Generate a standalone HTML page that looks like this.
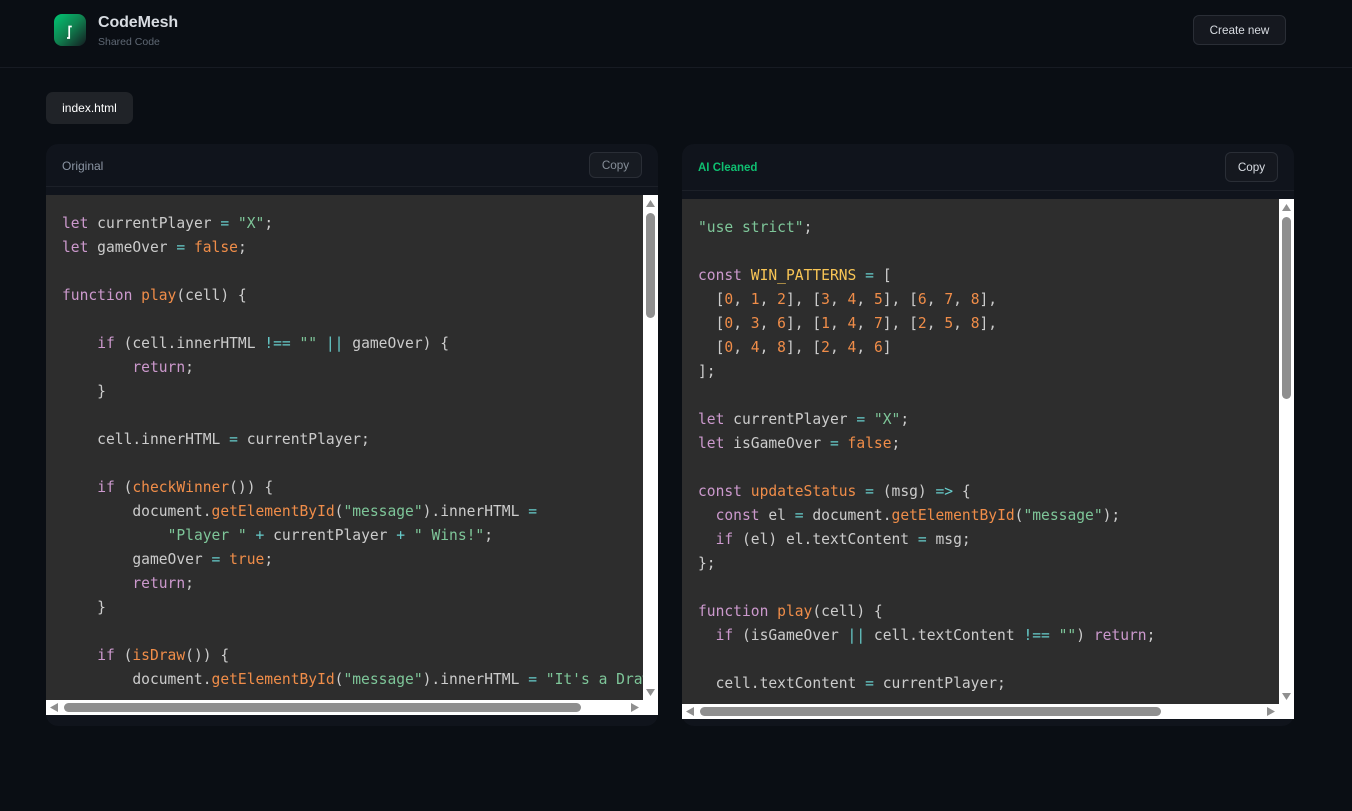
<!DOCTYPE html>
<html><head><meta charset="utf-8"><title>CodeMesh</title>
<style>
*{box-sizing:border-box}
html,body{margin:0;width:1352px;height:811px;overflow:hidden;background:#0a0e14;font-family:"Liberation Sans",sans-serif}
.a{position:absolute}
.hline{left:0;top:67px;width:1352px;height:1px;background:#171b23}
.logo{left:54px;top:14px;width:32px;height:32px;border-radius:8px;background:linear-gradient(135deg,#00c673 0%,#10804f 50%,#141a20 100%)}
.brand{left:98px;top:13px;font-size:16px;line-height:20px;font-weight:bold;color:#d8dce2;letter-spacing:-.1px}
.sub{left:98px;top:35px;font-size:10.5px;line-height:14px;color:#5f6874}
.btn{display:flex;align-items:center;justify-content:center;border:1px solid #2a2e36;border-radius:6px;background:#15181f;color:#d8dce2;font-size:11.7px}
.panel{top:144px;width:612px;height:582px;background:#10141c;border-radius:12px}
.pl{left:46px}.pr{left:682px}
.line{height:1px;background:#1c2028}
.code{background:#2d2d2d;overflow:hidden}
pre{margin:0;position:absolute;left:16px;top:17px;font-family:"DejaVu Sans Mono","Liberation Mono",monospace;font-size:14.62px;line-height:24px;color:#ccc;letter-spacing:0;white-space:pre}
.k{color:#cc99cd}.s{color:#7ec699}.f{color:#f08d49}.o{color:#67cdcc}.c{color:#f8c555}
.w{background:#fff}
.t{background:#8f8f8f;border-radius:5px}
</style></head><body>
<div class="a hline"></div>
<div class="a logo"><svg width="32" height="32" style="display:block"><path d="M13 24h2.200V12.500h2.600" fill="none" stroke="#fff" stroke-width="1.700"/></svg></div>
<div class="a brand">CodeMesh</div>
<div class="a sub">Shared Code</div>
<div class="a btn" style="left:1193px;top:15px;width:93px;height:30px">Create new</div>
<div class="a" style="left:46px;top:92px;width:87px;height:32px;border-radius:7px;background:#202328;color:#fff;font-size:12px;line-height:33px;text-align:center">index.html</div>

<div class="a panel pl"></div>
<div class="a" style="left:62px;top:158px;font-size:12px;line-height:16px;color:#8b95a3">Original</div>
<div class="a btn" style="left:589px;top:152px;width:53px;height:26px;color:#858d97;background:#171b22">Copy</div>
<div class="a line" style="left:46px;top:186px;width:612px"></div>
<div class="a code" style="left:46px;top:195px;width:597px;height:505px"><pre><span class="k">let</span> currentPlayer <span class="o">=</span> <span class="s">"X"</span>;
<span class="k">let</span> gameOver <span class="o">=</span> <span class="f">false</span>;

<span class="k">function</span> <span class="f">play</span>(cell) {

    <span class="k">if</span> (cell.innerHTML <span class="o">!==</span> <span class="s">""</span> <span class="o">||</span> gameOver) {
        <span class="k">return</span>;
    }

    cell.innerHTML <span class="o">=</span> currentPlayer;

    <span class="k">if</span> (<span class="f">checkWinner</span>()) {
        document.<span class="f">getElementById</span>(<span class="s">"message"</span>).innerHTML <span class="o">=</span>
            <span class="s">"Player "</span> <span class="o">+</span> currentPlayer <span class="o">+</span> <span class="s">" Wins!"</span>;
        gameOver <span class="o">=</span> <span class="f">true</span>;
        <span class="k">return</span>;
    }

    <span class="k">if</span> (<span class="f">isDraw</span>()) {
        document.<span class="f">getElementById</span>(<span class="s">"message"</span>).innerHTML <span class="o">=</span> <span class="s">"It's a Draw!"</span>;
        <span style="position:relative;top:3px">gameOver <span class="o">=</span> <span class="f">true</span>;</span></pre></div>
<div class="a w" style="left:643px;top:195px;width:15px;height:520px"></div>
<div class="a w" style="left:46px;top:700px;width:612px;height:15px"></div>
<div class="a t" style="left:646px;top:213px;width:9px;height:105px"></div>
<div class="a t" style="left:64px;top:703px;width:517px;height:9px"></div>

<div class="a panel pr"></div>
<div class="a" style="left:698px;top:160px;font-size:11.5px;line-height:16px;font-weight:bold;color:#0fbf71">AI Cleaned</div>
<div class="a btn" style="left:1225px;top:152px;width:53px;height:30px">Copy</div>
<div class="a line" style="left:682px;top:190px;width:612px"></div>
<div class="a code" style="left:682px;top:199px;width:597px;height:505px"><pre><span class="s">"use strict"</span>;

<span class="k">const</span> <span class="c">WIN_PATTERNS</span> <span class="o">=</span> [
  [<span class="f">0</span>, <span class="f">1</span>, <span class="f">2</span>], [<span class="f">3</span>, <span class="f">4</span>, <span class="f">5</span>], [<span class="f">6</span>, <span class="f">7</span>, <span class="f">8</span>],
  [<span class="f">0</span>, <span class="f">3</span>, <span class="f">6</span>], [<span class="f">1</span>, <span class="f">4</span>, <span class="f">7</span>], [<span class="f">2</span>, <span class="f">5</span>, <span class="f">8</span>],
  [<span class="f">0</span>, <span class="f">4</span>, <span class="f">8</span>], [<span class="f">2</span>, <span class="f">4</span>, <span class="f">6</span>]
];

<span class="k">let</span> currentPlayer <span class="o">=</span> <span class="s">"X"</span>;
<span class="k">let</span> isGameOver <span class="o">=</span> <span class="f">false</span>;

<span class="k">const</span> <span class="f">updateStatus</span> <span class="o">=</span> (msg) <span class="o">=&gt;</span> {
  <span class="k">const</span> el <span class="o">=</span> document.<span class="f">getElementById</span>(<span class="s">"message"</span>);
  <span class="k">if</span> (el) el.textContent <span class="o">=</span> msg;
};

<span class="k">function</span> <span class="f">play</span>(cell) {
  <span class="k">if</span> (isGameOver <span class="o">||</span> cell.textContent <span class="o">!==</span> <span class="s">""</span>) <span class="k">return</span>;

  cell.textContent <span class="o">=</span> currentPlayer;</pre></div>
<div class="a w" style="left:1279px;top:199px;width:15px;height:520px"></div>
<div class="a w" style="left:682px;top:704px;width:612px;height:15px"></div>
<div class="a t" style="left:1282px;top:217px;width:9px;height:182px"></div>
<div class="a t" style="left:700px;top:707px;width:461px;height:9px"></div>
<svg class="a" style="left:0;top:0" width="1352" height="811" fill="#8f8f8f">
<path d="M650.500 200l4.500 7h-9zM650.500 696l-4.500-7h9zM50 707.500l8-4.500v9zM639 707.500l-8-4.500v9z"/>
<path d="M1286.500 204l4.500 7h-9zM1286.500 700l-4.500-7h9zM686 711.500l8-4.500v9zM1275 711.500l-8-4.500v9z"/>
</svg>
</body></html>
